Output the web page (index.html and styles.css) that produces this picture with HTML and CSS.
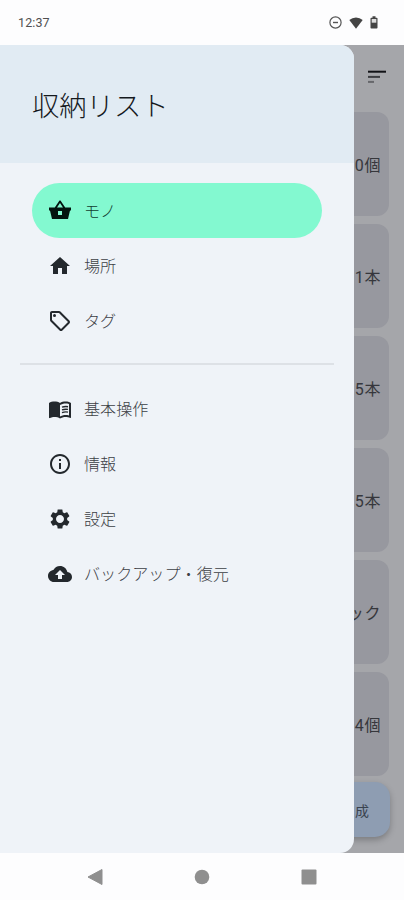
FILE: index.html
```html
<!DOCTYPE html>
<html lang="ja">
<head>
  <meta charset="UTF-8">
  <meta name="viewport" content="width=device-width, initial-scale=1">
  <title>収納リスト</title>
  <link rel="stylesheet" href="styles.css">
</head>
<body>

  <header class="status-bar">
    <span class="clock">12:37</span>
    <div class="status-icons">
      <svg width="13" height="13" viewBox="0 0 13 13"><circle cx="6.5" cy="6.5" r="5.6" fill="none" stroke="#555" stroke-width="1.2"/><path d="M4 6.5h5" stroke="#555" stroke-width="1.4"/></svg>
      <svg class="wifi" width="14" height="12" viewBox="0 0 14 12"><path d="M7 11.7L.3 3Q3.2.4 7 .4T13.7 3z" fill="#444"/></svg>
      <svg class="battery" width="8" height="13" viewBox="0 0 8 13"><path d="M2.5.3h3v1.400h1.200q.8 0 .8.8v9.200q0 .8-.8.8H1.300q-.8 0-.8-.8V2.500q0-.8.8-.8h1.200z" fill="#444"/><path d="M1.700 3h4.600v3.700H1.700z" fill="#ddd"/></svg>
    </div>
  </header>

  <main class="screen">
    <div class="list-page">
      <svg class="sort" width="24" height="24" viewBox="0 0 24 24"><path d="M3 5.700h18v2H3z" fill="#111216"/><path d="M3 10.900h12v2H3z" fill="#3d3e42"/><path d="M3 15.900h6v2H3z" fill="#66676b"/></svg>
      <ul class="cards">
        <li class="card">0個</li>
        <li class="card">1本</li>
        <li class="card">5本</li>
        <li class="card">5本</li>
        <li class="card">パック</li>
        <li class="card">4個</li>
      </ul>
      <button class="fab">作成</button>
    </div>

    <nav class="drawer">
      <h1 class="drawer-title">収納リスト</h1>
      <div class="menu">
        <a class="item active">
          <svg class="icon" viewBox="0 0 24 24"><path d="M17.210 8.500l-4.380-6.560c-.19-.28-.51-.42-.83-.42-.32 0-.64.14-.83.43L6.790 8.500H1v3h1l2 8.500h16l2-8.500h1v-3h-5.790zM9 8.500l3-4.400 3 4.400H9zM10 12h4v4h-4z" fill-rule="evenodd"/></svg>
          <span>モノ</span>
        </a>
        <a class="item">
          <svg class="icon" viewBox="0 0 24 24"><path d="M10 20v-6h4v6h5v-8h3L12 3 2 12h3v8z"/></svg>
          <span>場所</span>
        </a>
        <a class="item">
          <svg class="icon" viewBox="0 0 24 24"><path d="M21.410 11.580l-9-9C12.050 2.220 11.550 2 11 2H4c-1.100 0-2 .9-2 2v7c0 .55.22 1.050.59 1.420l9 9c.36.36.86.58 1.410.58s1.050-.22 1.410-.59l7-7c.37-.36.59-.86.59-1.410s-.23-1.060-.59-1.420zM13 20.010L4 11V4h7v-.01l9 9-7 7.020z"/><circle cx="6.500" cy="6.500" r="1.500"/></svg>
          <span>タグ</span>
        </a>
      </div>
      <hr class="divider">
      <div class="menu">
        <a class="item">
          <svg class="icon" viewBox="0 0 24 24"><path d="M21 5c-1.110-.35-2.330-.5-3.500-.5-1.950 0-4.050.4-5.500 1.500-1.450-1.100-3.550-1.500-5.500-1.500S2.450 4.900 1 6v14.650c0 .25.25.5.5.5.1 0 .15-.05.25-.05C3.100 20.450 5.050 20 6.500 20c1.950 0 4.050.4 5.500 1.500 1.350-.85 3.800-1.500 5.500-1.500 1.650 0 3.350.3 4.750 1.050.1.05.15.05.25.05.25 0 .5-.25.5-.5V6c-.6-.45-1.250-.75-2-1zm0 13.500c-1.100-.35-2.300-.5-3.500-.5-1.700 0-4.150.65-5.500 1.500V8c1.350-.85 3.800-1.500 5.500-1.500 1.200 0 2.400.15 3.500.5v11.500z"/><path d="M14 10.200q3-1.100 6-.5M14 12.900q3-1.100 6-.5M14 15.600q3-1.100 6-.5" fill="none" stroke="#23282d" stroke-width="1.400"/></svg>
          <span>基本操作</span>
        </a>
        <a class="item">
          <svg class="icon" viewBox="0 0 24 24"><path d="M11 7h2v2h-2zm0 4h2v6h-2zm1-9C6.480 2 2 6.480 2 12s4.480 10 10 10 10-4.480 10-10S17.520 2 12 2zm0 18c-4.410 0-8-3.590-8-8s3.590-8 8-8 8 3.590 8 8-3.590 8-8 8z"/></svg>
          <span>情報</span>
        </a>
        <a class="item">
          <svg class="icon" viewBox="0 0 24 24"><path d="M19.140 12.940c.04-.3.06-.61.06-.94 0-.32-.02-.64-.07-.94l2.030-1.580c.18-.14.23-.41.12-.61l-1.920-3.320c-.12-.22-.37-.29-.59-.22l-2.390.96c-.5-.38-1.030-.7-1.620-.94l-.36-2.540c-.04-.24-.24-.41-.48-.41h-3.840c-.24 0-.43.17-.47.41l-.36 2.540c-.59.24-1.130.57-1.620.94l-2.390-.96c-.22-.08-.47 0-.59.22L2.740 8.870c-.12.21-.08.47.12.61l2.030 1.580c-.05.3-.09.63-.09.94s.02.64.07.94l-2.030 1.580c-.18.14-.23.41-.12.61l1.920 3.320c.12.22.37.29.59.22l2.390-.96c.5.38 1.030.7 1.620.94l.36 2.540c.05.24.24.41.48.41h3.840c.24 0 .44-.17.47-.41l.36-2.540c.59-.24 1.130-.56 1.620-.94l2.390.96c.22.08.47 0 .59-.22l1.920-3.320c.12-.22.07-.47-.12-.61l-2.010-1.580zM12 16c-2.200 0-4-1.800-4-4s1.800-4 4-4 4 1.800 4 4-1.800 4-4 4z"/></svg>
          <span>設定</span>
        </a>
        <a class="item">
          <svg class="icon" viewBox="0 0 24 24"><path d="M19.350 10.040C18.670 6.590 15.640 4 12 4 9.110 4 6.600 5.640 5.350 8.040 2.340 8.360 0 10.910 0 14c0 3.310 2.690 6 6 6h13c2.760 0 5-2.240 5-5 0-2.640-2.050-4.780-4.650-4.960zM14 13v4h-4v-4H7l5-5 5 5h-3z"/></svg>
          <span>バックアップ・復元</span>
        </a>
      </div>
    </nav>
  </main>

  <footer class="nav-bar">
    <svg width="16" height="18" viewBox="0 0 16 18"><path d="M15 1.500v15L1 9z" fill="#8f8f8f" stroke="#8f8f8f" stroke-linejoin="round"/></svg>
    <svg width="16" height="16" viewBox="0 0 16 16"><circle cx="8" cy="8" r="7.300" fill="#8f8f8f"/></svg>
    <svg width="16" height="16" viewBox="0 0 16 16"><rect x=".5" y=".5" width="15" height="15" rx="1" fill="#8f8f8f"/></svg>
  </footer>

</body>
</html>
```
FILE: styles.css
```css
* {
  box-sizing: border-box;
}

body {
  margin: 0;
  height: 900px;
  display: flex;
  flex-direction: column;
  overflow: hidden;
  background: #fdfdfe;
  font-family: Roboto, "Noto Sans CJK JP", sans-serif;
  color: #3c4045;
}

.status-bar {
  height: 45px;
  padding: 0 26px 0 18px;
  display: flex;
  align-items: center;
  justify-content: space-between;
}

.clock {
  font-size: 12.5px;
  letter-spacing: 0.1px;
  color: #505050;
}

.status-icons {
  display: flex;
  align-items: center;
}

.wifi {
  margin-left: 7px;
}

.battery {
  margin-left: 7px;
}

.screen {
  position: relative;
  height: 808px;
  overflow: hidden;
}

.list-page {
  height: 100%;
  padding: 20px 15px 0 0;
  display: flex;
  flex-direction: column;
  align-items: flex-end;
  background: #a5a6aa;
}

.sort {
  flex: none;
  margin-bottom: 23px;
}

.cards {
  width: 374px;
  margin: 0;
  padding: 0;
  list-style: none;
  display: flex;
  flex-direction: column;
  gap: 8px;
}

.card {
  height: 104px;
  padding-right: 8px;
  display: flex;
  align-items: center;
  justify-content: flex-end;
  border-radius: 12px;
  background: #97989f;
  font-size: 16px;
  letter-spacing: 0.6px;
  color: #36373c;
}

.fab {
  flex: none;
  width: 110px;
  height: 55px;
  margin: 6px -1px 0 0;
  padding: 0 20px 0 0;
  border: none;
  border-radius: 15px;
  background: #8e9db2;
  box-shadow: 0 3px 6px rgba(0, 0, 0, 0.25);
  font: 14px "Noto Sans CJK JP", sans-serif;
  letter-spacing: 1px;
  text-align: right;
  color: #3a434f;
}

/* drawer slides over the list */
.drawer {
  position: absolute;
  top: 0;
  left: 0;
  width: 354px;
  height: 100%;
  overflow: hidden;
  border-radius: 0 14px 14px 0;
  background: #eff3f8;
}

.drawer-title {
  height: 118px;
  margin: 0 0 20px;
  padding: 0 32px 0;
  line-height: 119px;
  background: #e1ebf3;
  font-family: "Noto Sans CJK JP", sans-serif;
  font-size: 27.3px;
  font-weight: 300;
  color: #15191d;
}

.menu {
  padding: 0 32px;
}

.item {
  height: 55px;
  padding-left: 16px;
  display: flex;
  align-items: center;
  gap: 12px;
  border-radius: 28px;
  font-family: "Noto Sans CJK JP", sans-serif;
  font-size: 16.1px;
  font-weight: 300;
}

.item span {
  padding-bottom: 1px;
}

.active {
  background: #83f9d0;
  color: #123d30;
}

.icon {
  width: 24px;
  height: 24px;
  fill: #23282d;
}

.active .icon {
  fill: #03150f;
}

.divider {
  height: 2px;
  margin: 15px 20px 16px;
  border: none;
  background: #dde1e6;
}

.nav-bar {
  height: 47px;
  padding: 0 87px;
  display: flex;
  align-items: center;
  justify-content: space-between;
}
```
